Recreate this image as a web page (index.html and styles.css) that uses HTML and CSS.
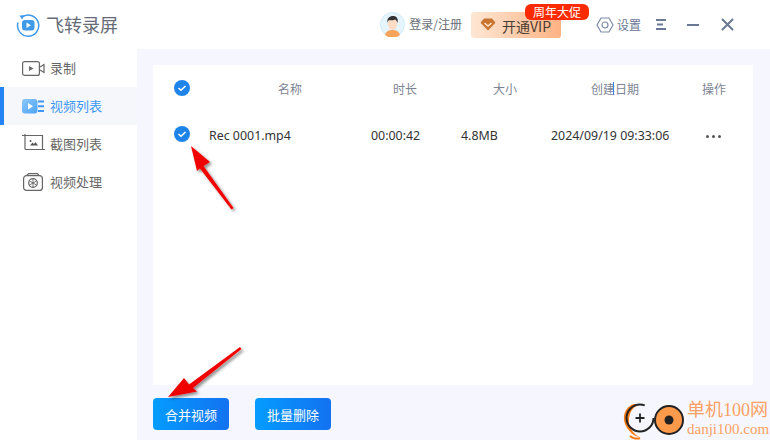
FILE: index.html
```html
<!DOCTYPE html>
<html lang="zh">
<head>
<meta charset="utf-8">
<title>飞转录屏</title>
<link rel="stylesheet" href="styles.css">
</head>
<body>
<div class="app">
  <header class="header">
    <div class="brand">
      <svg class="logo" width="24" height="24" viewBox="0 0 24 24">
        <path d="M6.500 3.600A10.600 10.600 0 1 1 2 9.500" fill="none" stroke="#3f9bea" stroke-width="1.500"/>
        <path d="M3.500 2.500 L8.500 2.200 L6 6.500Z" fill="#3f9bea"/>
        <rect x="6" y="7" width="12.500" height="10.500" rx="3" fill="#3f9bea"/>
        <path d="M10.500 9.600 L15 12.200 L10.500 14.900Z" fill="#fff"/>
      </svg>
      <span class="brand-name">飞转录屏</span>
    </div>
    <div class="tools">
      <div class="user">
        <svg class="avatar" width="25" height="25" viewBox="0 0 25 25">
          <circle cx="12.500" cy="12.500" r="12" fill="#e6f5fd" stroke="#cdeafa" stroke-width="1"/>
          <path d="M5 23c1-4 4-5 7.500-5s6.500 1 7.500 5a12 12 0 0 1-15 0Z" fill="#f6a45c"/>
          <ellipse cx="12.500" cy="12" rx="4.700" ry="6" fill="#fcdcc5"/>
          <path d="M7.500 11c-.8-5 2-7 5.500-7s5.500 2.500 4.500 7c-.5-2-1.500-3-2.500-3.500-2 1-5 1-6 .5-.8.800-1.300 1.800-1.500 3Z" fill="#333"/>
        </svg>
        <span class="user-text">登录/注册</span>
      </div>
      <div class="vip">
        <svg width="16" height="13" viewBox="0 0 16 13">
          <path d="M4 .5h8l3.500 4.200L8 12.500.5 4.700Z" fill="#c8742f"/>
          <path d="M4.500 5 8 8l3.500-3" fill="none" stroke="#fde4cf" stroke-width="1.500"/>
        </svg>
        <span class="vip-text">开通VIP</span>
        <span class="vip-badge">周年大促</span>
      </div>
      <div class="settings">
        <svg width="18" height="18" viewBox="0 0 18 18">
          <path d="M5 2h8l4 7-4 7H5L1 9Z" fill="none" stroke="#7d8aa6" stroke-width="1.200"/>
          <circle cx="9" cy="9" r="3" fill="none" stroke="#7d8aa6" stroke-width="1.200"/>
        </svg>
        <span class="settings-text">设置</span>
      </div>
      <svg class="win menu" width="11" height="11" viewBox="0 0 11 11">
        <path d="M0 1h10M1 5.500h6M0 10h10" stroke="#6a7895" stroke-width="2" fill="none"/>
      </svg>
      <svg class="win minimize" width="12" height="2" viewBox="0 0 12 2">
        <path d="M0 1h12" stroke="#6a7895" stroke-width="2"/>
      </svg>
      <svg class="win close" width="13" height="13" viewBox="0 0 13 13">
        <path d="M1 1l11 11M12 1 1 12" stroke="#6a7895" stroke-width="2" fill="none"/>
      </svg>
    </div>
  </header>
  <div class="body">
    <nav class="sidebar">
      <div class="nav-item">
        <svg width="23" height="15" viewBox="0 0 23 15">
          <rect x=".6" y=".6" width="16.800" height="13.800" rx="2" fill="none" stroke="#666" stroke-width="1.200"/>
          <path d="M7 5l4.500 2.500L7 10Z" fill="#666"/>
          <path d="M18 6l4-2.500v8L18 9" fill="none" stroke="#666" stroke-width="1.200"/>
        </svg>
        <span>录制</span>
      </div>
      <div class="nav-item active">
        <svg width="23" height="15" viewBox="0 0 23 15">
          <defs><linearGradient id="vg" x1="0" y1="0" x2="1" y2="1"><stop offset="0" stop-color="#8cc8fb"/><stop offset="1" stop-color="#4ba3f6"/></linearGradient></defs>
          <rect x="0" y="0" width="15.500" height="14.500" rx="3" fill="url(#vg)"/>
          <path d="M6 4l5 3.200L6 10.500Z" fill="#fff"/>
          <path d="M16 2.500h6M16 7.200h6M16 12h6" stroke="#3f97f3" stroke-width="2"/>
        </svg>
        <span>视频列表</span>
      </div>
      <div class="nav-item">
        <svg width="23" height="18" viewBox="0 0 23 18">
          <path d="M0 1.500h20.500V15M3 0v14.500a1 1 0 0 0 1 1h19" fill="none" stroke="#666" stroke-width="1.200"/>
          <path d="M8 11.500l2.500-3 1.500 1.500 1.500-2 2.500 3.500Z" fill="#555"/>
          <circle cx="8.500" cy="7" r="1" fill="#555"/>
        </svg>
        <span>截图列表</span>
      </div>
      <div class="nav-item">
        <svg width="20" height="18" viewBox="0 0 20 18">
          <rect x=".6" y="2.600" width="18.800" height="14.800" rx="3" fill="none" stroke="#666" stroke-width="1.200"/>
          <path d="M4 2.500 5.500.7h9L16 2.500" fill="none" stroke="#666" stroke-width="1.200"/>
          <circle cx="10" cy="10" r="4.300" fill="none" stroke="#666" stroke-width="1.200"/>
          <path d="M6.500 8l7 4M13.500 8l-7 4M10 6v8" stroke="#666" stroke-width=".9"/>
        </svg>
        <span>视频处理</span>
      </div>
    </nav>
    <main class="main">
      <section class="card">
        <div class="row row-head">
          <span class="check"><svg width="16" height="16" viewBox="0 0 16 16"><circle cx="8" cy="8" r="8" fill="#1e84e8"/><path d="M4.500 8 7 10.300 11.500 6" fill="none" stroke="#fff" stroke-width="1.500"/></svg></span>
          <span class="col name">名称</span>
          <span class="col dur">时长</span>
          <span class="col size">大小</span>
          <span class="col date">创建日期<i class="cursor"></i></span>
          <span class="col op">操作</span>
        </div>
        <div class="row row-data">
          <span class="check"><svg width="16" height="16" viewBox="0 0 16 16"><circle cx="8" cy="8" r="8" fill="#1e84e8"/><path d="M4.500 8 7 10.300 11.500 6" fill="none" stroke="#fff" stroke-width="1.500"/></svg></span>
          <span class="col name">Rec 0001.mp4</span>
          <span class="col dur">00:00:42</span>
          <span class="col size">4.8MB</span>
          <span class="col date">2024/09/19 09:33:06</span>
          <span class="col op"><i></i><i></i><i></i></span>
        </div>
      </section>
      <div class="actions">
        <button class="btn">合并视频</button>
        <button class="btn">批量删除</button>
      </div>
    </main>
  </div>

  <svg class="overlay" width="770" height="440" viewBox="0 0 770 440">
    <defs><filter id="sh" x="-30%" y="-30%" width="160%" height="160%"><feDropShadow dx="2" dy="2" stdDeviation="1.500" flood-color="#000" flood-opacity=".45"/></filter></defs>
    <g filter="url(#sh)" fill="#f00000">
      <path d="M191 146 L210 162 L203.500 166 L233.500 208 L231.500 209.500 L200 168.500 L197 171Z"/>
      <path d="M168 397 L184 378 L189 384.500 L240 347 L241.500 349 L193 388 L197 391.500Z"/>
    </g>
  </svg>

  <div class="watermark">
    <svg width="64" height="44" viewBox="0 0 64 44">
      <path d="M11 2C3 4-2 14 3 24c3 6 8 10 13 11-6-4-11-10-10-18C7 10 9 6 15 3Z" fill="#fb7a10" transform="translate(2 3)"/>
      <path d="M9 37c3 3 8 3 10 2" stroke="#fb7a10" stroke-width="2" fill="none"/>
      <circle cx="19" cy="19" r="13.500" fill="none" stroke="#222" stroke-width="2" stroke-dasharray="68 17"/>
      <path d="M19 14.500v9M14.500 19h9" stroke="#222" stroke-width="1.800"/>
      <circle cx="48" cy="21" r="14" fill="#fb9a4b" stroke="#222" stroke-width="2"/>
      <circle cx="48" cy="21" r="4.500" fill="#222"/>
    </svg>
    <div class="wm-text">
      <span class="wm-cn">单机100网</span>
      <span class="wm-en">danji100.com</span>
    </div>
  </div>
</div>
</body>
</html>
```
FILE: styles.css
```css
* { box-sizing: border-box; }
html, body { margin: 0; padding: 0; }
body {
  width: 770px;
  height: 440px;
  overflow: hidden;
  background: #fff;
  font-family: "Noto Sans", "Noto Sans CJK SC", sans-serif;
  font-size: 13px;
  color: #333;
}
.app { position: relative; width: 770px; height: 440px; display: flex; flex-direction: column; }

.header {
  height: 49px;
  display: flex;
  align-items: center;
  justify-content: space-between;
  background: #fff;
  flex: none;
}
.brand { display: flex; align-items: center; padding-left: 16px; }
.logo { margin-right: 6px; }
.brand-name { font-family: "Noto Sans CJK SC", sans-serif; font-size: 18px; color: #666d78; padding-bottom: 2px; }
.tools { display: flex; align-items: center; padding-right: 36px; }
.user { display: flex; align-items: center; gap: 4px; }
.avatar { display: block; }
.user-text { font-family: "Noto Sans CJK SC", sans-serif; font-size: 12px; color: #6a6e78; padding-bottom: 2px; }
.vip {
  position: relative;
  display: flex;
  align-items: center;
  width: 90px;
  height: 26px;
  margin-left: 9px;
  padding-left: 9px;
  gap: 6px;
  border-radius: 3px;
  background: linear-gradient(90deg, #fde7d4, #fdb283);
}
.vip-text { font-family: "Noto Sans CJK SC", sans-serif; font-size: 14px; color: #4a3c32; line-height: 20px; padding-top: 2px; }
.vip-badge {
  position: absolute;
  left: 54px;
  top: -8px;
  width: 64px;
  height: 16px;
  border-radius: 6px;
  background: #fb2a00;
  color: #fff;
  font-family: "Noto Sans CJK SC", sans-serif;
  font-size: 12px;
  line-height: 15px;
  text-align: center;
}
.settings { display: flex; align-items: center; gap: 3px; margin-left: 35px; }
.settings-text { font-family: "Noto Sans CJK SC", sans-serif; font-size: 12px; color: #6a7895; padding-bottom: 1px; }
.win { display: block; flex: none; }
.menu { margin-left: 15px; }
.minimize { margin-left: 20px; }
.close { margin-left: 22px; }

.body { flex: 1; display: flex; min-height: 0; }
.sidebar { width: 137px; flex: none; background: #fff; }
.nav-item {
  height: 38px;
  display: flex;
  align-items: center;
  padding-left: 18px;
  font-family: "Noto Sans CJK SC", sans-serif;
  font-size: 13px;
  color: #666;
  border-left: 4px solid transparent;
}
.nav-item svg { display: block; }
.nav-item span { margin-left: 5px; padding-bottom: 2px; }
.nav-item:nth-child(3) svg { margin-top: -2px; }
.nav-item:nth-child(4) svg { margin-left: 1px; margin-right: 2px; margin-top: -1px; }
.nav-item.active { background: #f6f7fb; border-left-color: #2484f4; color: #3d98f5; }

.main {
  flex: 1;
  background: #f6f7fe;
  padding: 16px 17px 10px 16px;
  display: flex;
  flex-direction: column;
}
.card { height: 320px; background: #fff; flex: none; }
.row { display: flex; align-items: center; height: 46px; }
.row-head { color: #7d8494; font-family: "Noto Sans CJK SC", sans-serif; font-size: 12px; }
.row-data { color: #333; font-size: 12.4px; padding-top: 2px; }
.check { display: block; width: 16px; height: 16px; margin-left: 21px; flex: none; }
.row-data .check { margin-top: -2px; }
.check svg { display: block; }
.col { display: block; flex: none; white-space: nowrap; }

.row-head .col { text-align: center; }
.row-head .name { width: 200px; }
.row-head .dur { width: 30px; }
.row-head .size { width: 30px; margin-left: 70px; }
.row-head .date { position: relative; width: 52px; margin-left: 69px; }
.cursor { position: absolute; left: 24px; top: 2px; width: 1px; height: 13px; background: #2f86e6; }
.row-head .op { width: 24px; margin-left: 61px; }

.row-data .name { width: 181px; padding-left: 19px; }
.row-data .dur { width: 48px; }
.row-data .size { width: 48px; margin-left: 42px; }
.row-data .date { width: 118px; margin-left: 42px; }
.row-data .op { display: flex; gap: 3px; width: 16px; margin-left: 37px; margin-top: 3px; }
.op i { display: block; width: 3px; height: 3px; border-radius: 50%; background: #555; }

.actions { display: flex; gap: 26px; margin-top: 13px; }
.btn {
  width: 76px;
  height: 32px;
  border: 0;
  padding: 0;
  border-radius: 4px;
  background: linear-gradient(90deg, #049cff, #1372f0);
  color: #fff;
  font-family: "Noto Sans CJK SC", sans-serif;
  font-size: 13px;
}

.overlay { position: absolute; left: 0; top: 0; pointer-events: none; }
.watermark { position: absolute; left: 621px; top: 397px; display: flex; align-items: flex-start; }
.watermark svg { flex: none; margin-top: 2px; }
.wm-text { display: flex; flex-direction: column; margin-left: 2px; margin-top: 2px; }
.wm-cn { font-family: "Liberation Serif", "Noto Sans CJK SC", serif; font-size: 18px; line-height: 22px; color: #fb9f63; white-space: nowrap; }
.wm-en { font-family: "Liberation Serif", serif; font-size: 15px; line-height: 16px; color: #fb9f63; white-space: nowrap; }
```
